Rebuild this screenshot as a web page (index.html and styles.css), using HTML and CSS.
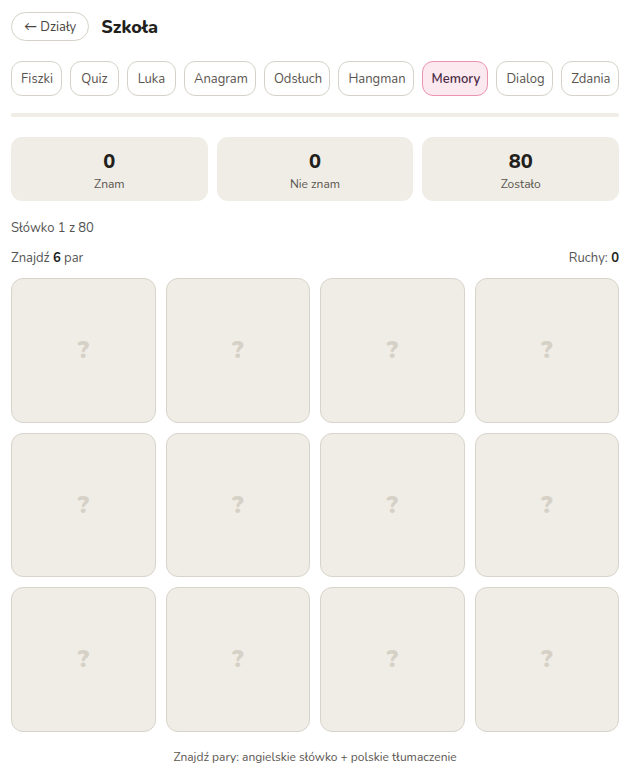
FILE: index.html
```html
<!DOCTYPE html>
<html lang="pl">
<head>
    <meta charset="UTF-8">
    <meta name="viewport" content="width=device-width, initial-scale=1.0">
    <title>Memory - Szkoła</title>
    <link rel="stylesheet" href="styles.css">
</head>
<body>

<div class="app">
    <!-- Nagłówek -->
    <div class="header">
        <button class="back-btn">&larr; Działy</button>
        <h1>Szkoła</h1>
    </div>

    <!-- Tryby -->
    <div class="modes">
        <button class="mode">Fiszki</button>
        <button class="mode">Quiz</button>
        <button class="mode">Luka</button>
        <button class="mode">Anagram</button>
        <button class="mode">Odsłuch</button>
        <button class="mode">Hangman</button>
        <button class="mode active">Memory</button>
        <button class="mode">Dialog</button>
        <button class="mode">Zdania</button>
    </div>

    <div class="progress"><div class="progress-fill" style="width: 0%;"></div></div>

    <!-- Statystyki -->
    <div class="stats">
        <div class="stat"><div class="stat-num">0</div><div class="stat-label">Znam</div></div>
        <div class="stat"><div class="stat-num">0</div><div class="stat-label">Nie znam</div></div>
        <div class="stat"><div class="stat-num">80</div><div class="stat-label">Zostało</div></div>
    </div>

    <div class="counter">Słówko 1 z 80</div>

    <div class="memory-info">
        <span>Znajdź <b>6</b> par</span>
        <span>Ruchy: <b>0</b></span>
    </div>

    <div class="memory-grid">
        <div class="card">?</div>
        <div class="card">?</div>
        <div class="card">?</div>
        <div class="card">?</div>
        <div class="card">?</div>
        <div class="card">?</div>
        <div class="card">?</div>
        <div class="card">?</div>
        <div class="card">?</div>
        <div class="card">?</div>
        <div class="card">?</div>
        <div class="card">?</div>
    </div>

    <p class="hint">Znajdź pary: angielskie słówko + polskie tłumaczenie</p>
</div>

</body>
</html>
```

FILE: styles.css
```css
* {
    margin: 0;
    padding: 0;
    box-sizing: border-box;
}

body {
    font-family: 'Nunito', 'Lato', sans-serif;
    background: #fff;
    color: #2b2622;
}

.app {
    padding: 12px 13px 0 11px;
}

button {
    font-family: inherit;
    cursor: pointer;
}

.header {
    display: flex;
    align-items: center;
    gap: 12px;
}

.back-btn {
    height: 29px;
    padding: 0 12px;
    border: 1px solid #d6d2c8;
    border-radius: 15px;
    background: #fff;
    color: #4a4540;
    font-size: 13px;
}

h1 {
    font-size: 18px;
    font-weight: 800;
    color: #231f1c;
}

.modes {
    display: flex;
    gap: 8px;
    margin-top: 20px;
}

.mode {
    height: 35px;
    min-width: 49px;
    padding: 0 9px;
    border: 1px solid #d6d2c8;
    border-radius: 11px;
    background: #fff;
    color: #5a554f;
    font-size: 13px;
}

.mode.active {
    background: #fce8ef;
    border-color: #ec93b0;
    color: #4a2a45;
    font-weight: 600;
}

.progress {
    height: 4px;
    margin-top: 17px;
    background: #f0ede6;
    border-radius: 2px;
}

.progress-fill {
    height: 100%;
    background: #e07a9c;
}

.stats {
    display: grid;
    grid-template-columns: repeat(3, 1fr);
    gap: 9px;
    margin-top: 20px;
}

.stat {
    height: 64px;
    background: #f0ede6;
    border-radius: 11px;
    text-align: center;
    padding-top: 13px;
}

.stat-num {
    font-size: 20px;
    font-weight: 800;
    line-height: 24px;
    color: #231f1c;
}

.stat-label {
    font-size: 12px;
    color: #5a554f;
    margin-top: 2px;
}

.counter {
    font-size: 13px;
    color: #555;
    margin-top: 18px;
}

.memory-info {
    display: flex;
    justify-content: space-between;
    font-size: 13px;
    color: #555;
    margin-top: 12px;
}

.memory-info b {
    color: #231f1c;
}

.memory-grid {
    display: grid;
    grid-template-columns: repeat(4, 1fr);
    gap: 10px;
    margin-top: 11px;
}

.card {
    aspect-ratio: 1;
    background: #f0ede6;
    border: 1px solid #d8d4cb;
    border-radius: 12px;
    display: flex;
    justify-content: center;
    align-items: center;
    font-size: 24px;
    font-weight: 900;
    color: #d6d1c7;
}

.hint {
    text-align: center;
    font-size: 12px;
    color: #5a554f;
    margin-top: 17px;
}
```
